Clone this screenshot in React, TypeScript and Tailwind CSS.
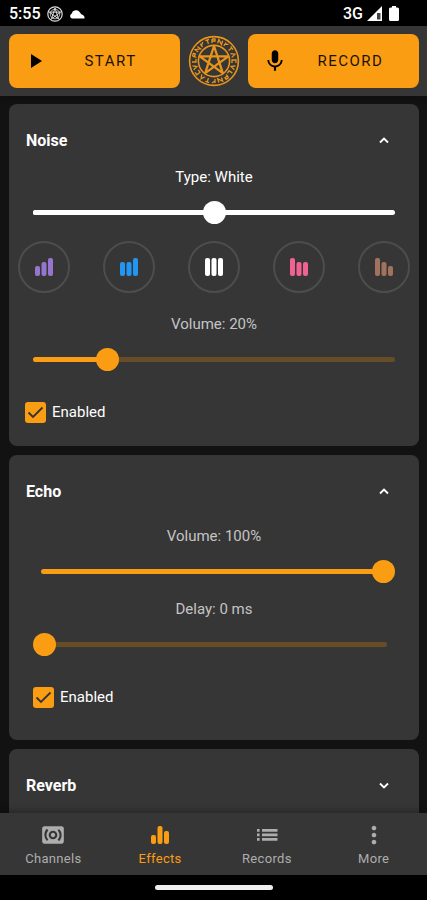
import { useState } from "react";
import type { ReactNode } from "react";
import { MdMic, MdMoreVert, MdPlayArrow, MdSurroundSound } from "react-icons/md";

const noiseTypes = [
  { name: "Violet", color: "text-[#9575cd]", bars: [10, 14, 18] },
  { name: "Blue", color: "text-[#2196f3]", bars: [14, 14, 18] },
  { name: "White", color: "text-white", bars: [18, 18, 18] },
  { name: "Pink", color: "text-[#f06292]", bars: [18, 14, 14] },
  { name: "Brown", color: "text-[#a1735f]", bars: [18, 14, 10] },
];

const runes = [
  "M-2 -2V2M-2 -2H1V0H-2", "M-2 2V-2L2 2V-2", "M-1 -2V2M-1 0L2 -2", "M-2 -2H2M0 -2V2",
  "M-2 2L0 -2L2 2", "M2 -2H-1V2H2", "M-2 -2L0 2L2 -2", "M-1 -2V2H2",
];

function Bars({ heights }: { heights: number[] }) {
  return (
    <svg width="20" height="20" viewBox="0 0 20 20" fill="currentColor" aria-hidden="true">
      {heights.map((h, i) => (
        <rect key={i} x={1 + i * 6.5} y={19 - h} width="5" height={h} rx="2" />
      ))}
    </svg>
  );
}

function ListIcon() {
  return (
    <svg width="22" height="14" viewBox="0 0 22 14" fill="currentColor" aria-hidden="true">
      {[1, 5.5, 10].map((y) => (
        <path key={y} d={`M1 ${y}h2.600v2.700h-2.600zM6 ${y}h15.500v2.700h-15.500z`} />
      ))}
    </svg>
  );
}

function Pentacle() {
  return (
    <svg width="52" height="52" viewBox="-26 -26 52 52" fill="none" stroke="#e8941a" className="shrink-0" aria-hidden="true">
      <circle r="24.4" strokeWidth="1.6" />
      <circle r="15.6" strokeWidth="1.6" />
      <path d="M0 -15L8.8 12.1L-14.3 -4.6H14.3L-8.8 12.1Z" strokeWidth="2.3" strokeLinejoin="round" />
      {Array.from({ length: 20 }, (_, i) => (
        <path key={i} d={runes[i % runes.length]} transform={`rotate(${i * 18}) translate(0 -20)`} strokeWidth="1.3" />
      ))}
    </svg>
  );
}

type SliderProps = { label: string; value: number; onChange: (v: number) => void; max?: number; white?: boolean };

function Slider({ label, value, onChange, max = 100, white }: SliderProps) {
  return (
    <div className={`mt-[13px] grid items-center ${white ? "text-white" : "text-[#fb9d13]"}`}>
      <div className={`col-start-1 row-start-1 mx-2 h-[5px] overflow-hidden rounded-full ${white ? "bg-white" : "bg-[#674d27]"}`}>
        <div className="h-full bg-current" style={{ width: `${(value / max) * 100}%` }} />
      </div>
      <input
        type="range"
        aria-label={label}
        min={0}
        max={max}
        value={value}
        onChange={(e) => onChange(Number(e.target.value))}
        className="col-start-1 row-start-1 h-6 w-full cursor-pointer appearance-none bg-transparent [&::-webkit-slider-thumb]:size-[23px] [&::-webkit-slider-thumb]:appearance-none [&::-webkit-slider-thumb]:rounded-full [&::-webkit-slider-thumb]:bg-current"
      />
    </div>
  );
}

function Enabled() {
  const [on, setOn] = useState(true);
  return (
    <label className="mt-[30px] flex h-[22px] items-center gap-[6px] text-[15px] text-white">
      <span className="grid size-[21px]">
        <input
          type="checkbox"
          checked={on}
          onChange={() => setOn(!on)}
          className="col-start-1 row-start-1 size-[21px] appearance-none rounded-[3px] border-2 border-[#fb9d13] checked:bg-[#fb9d13]"
        />
        {on && (
          <svg viewBox="0 0 21 21" className="pointer-events-none col-start-1 row-start-1" fill="none" stroke="#333" strokeWidth="1.8" aria-hidden="true">
            <path d="M3.5 10.5L8 15L17.5 5.5" />
          </svg>
        )}
      </span>
      Enabled
    </label>
  );
}

function Card({ title, initial = true, children }: { title: string; initial?: boolean; children?: ReactNode }) {
  const [open, setOpen] = useState(initial);
  return (
    <section className="rounded-lg bg-[#363636] px-4 pt-[26px] pb-[23px]">
      <h2>
        <button type="button" aria-expanded={open} onClick={() => setOpen(!open)} className="flex h-[22px] w-full items-center justify-between pr-3 pl-px text-base font-bold text-white">
          {title}
          <svg width="14" height="14" viewBox="0 0 14 14" fill="none" stroke="currentColor" strokeWidth="1.8" aria-hidden="true">
            <path d={open ? "M3 8.500L7 4.500L11 8.500" : "M3 4.500L7 8.500L11 4.500"} />
          </svg>
        </button>
      </h2>
      {open && children}
    </section>
  );
}

const tabs = [
  { label: "Channels", icon: <MdSurroundSound className="size-[26px]" /> },
  { label: "Effects", icon: <Bars heights={[9, 18, 13]} /> },
  { label: "Records", icon: <ListIcon /> },
  { label: "More", icon: <MdMoreVert className="size-7" /> },
];

export default function App() {
  const [type, setType] = useState(2);
  const [noiseVolume, setNoiseVolume] = useState(20);
  const [echoVolume, setEchoVolume] = useState(100);
  const [delay, setDelay] = useState(0);
  const [tab, setTab] = useState("Effects");

  return (
    <div className="flex h-screen flex-col bg-[#121212] font-[Roboto,sans-serif]">
      <div className="flex h-[26px] shrink-0 items-center justify-between bg-black pt-px pr-7 pl-[9px] text-base font-medium text-white">
        <div className="flex items-center gap-[6px]">
          <span>5:55</span>
          <svg width="16" height="16" viewBox="-8 -8 16 16" fill="none" stroke="#ddd" aria-hidden="true">
            <circle r="7.2" strokeWidth="1.2" />
            <circle r="4.8" strokeWidth="0.8" />
            <path d="M0 -6L3.5 4.9L-5.7 -1.9H5.7L-3.5 4.9Z" strokeWidth="1" />
          </svg>
          <svg width="16" height="10" viewBox="0 0 16 10" fill="white" aria-hidden="true">
            <path d="M3 9.500A2.500 2.500 0 0 1 2.600 4.800A4.600 4.600 0 0 1 11 3.500Q12 5.500 14 6Q15.800 7 15.600 9.500Z" />
          </svg>
        </div>
        <div className="flex items-center gap-1">
          <span>3G</span>
          <svg width="15" height="15" viewBox="0 0 15 15" aria-hidden="true">
            <path d="M0 15L15 0V15Z" fill="white" />
            <path d="M10 7H13.500V13.500H10Z" fill="#444" />
          </svg>
          <svg width="10" height="15" viewBox="0 0 10 15" className="ml-[3px]" fill="white" aria-hidden="true">
            <path d="M3 0H7V1.500H8.500Q10 1.500 10 3V13.500Q10 15 8.500 15H1.500Q0 15 0 13.500V3Q0 1.500 1.500 1.500H3Z" />
          </svg>
        </div>
      </div>

      <header className="z-10 flex h-[70px] shrink-0 items-center gap-2 bg-[#363636] pr-2 pl-[9px] shadow-md">
        <button type="button" className="flex h-[54px] flex-1 items-center rounded-lg bg-[#fb9d13] px-[14px] text-[15px] tracking-widest text-[#1c1203]">
          <MdPlayArrow className="size-6 text-black" />
          <span className="flex-1 pl-2 text-center">START</span>
        </button>
        <Pentacle />
        <button type="button" className="flex h-[54px] flex-1 items-center rounded-lg bg-[#fb9d13] px-[14px] text-[15px] tracking-widest text-[#1c1203]">
          <MdMic className="size-[26px] text-black" />
          <span className="flex-1 pl-2 text-center">RECORD</span>
        </button>
      </header>

      <main className="flex flex-1 flex-col gap-[9px] overflow-y-auto py-2 pr-2 pl-[9px] [scrollbar-width:none] *:shrink-0">
        <Card title="Noise">
          <p className="mt-[15px] text-center text-[15px] leading-5 text-white">Type: {noiseTypes[type].name}</p>
          <Slider label="Type" value={type} max={4} onChange={setType} white />
          <div className="-mx-[7px] mt-[17px] flex justify-between">
            {noiseTypes.map((n, i) => (
              <button key={n.name} type="button" aria-label={n.name} onClick={() => setType(i)} className={`flex size-[52px] items-center justify-center rounded-full border-2 border-[#4d4d4d] ${n.color}`}>
                <Bars heights={n.bars} />
              </button>
            ))}
          </div>
          <p className="mt-[21px] text-center text-[15px] leading-5 text-[#c4c4c4]">Volume: {noiseVolume}%</p>
          <Slider label="Volume" value={noiseVolume} onChange={setNoiseVolume} />
          <Enabled />
        </Card>

        <Card title="Echo">
          <div className="px-2 pt-2 pb-[9px]">
            <p className="mt-[15px] text-center text-[15px] leading-5 text-[#c4c4c4]">Volume: {echoVolume}%</p>
            <Slider label="Volume" value={echoVolume} onChange={setEchoVolume} />
            <p className="mt-4 text-center text-[15px] leading-5 text-[#c4c4c4]">Delay: {delay} ms</p>
            <Slider label="Delay" value={delay} max={1000} onChange={setDelay} />
            <Enabled />
          </div>
        </Card>

        <Card title="Reverb" initial={false} />
      </main>

      <nav className="z-10 flex h-[62px] shrink-0 bg-[#363636] shadow-[0_-3px_6px_rgba(0,0,0,0.25)]">
        {tabs.map((t) => (
          <button
            key={t.label}
            type="button"
            onClick={() => setTab(t.label)}
            className={`flex flex-1 flex-col items-center pt-2 text-[13px] leading-5 tracking-wide ${tab === t.label ? "text-[#fb9d13]" : "text-[#adadad]"}`}
          >
            <span className="flex h-7 items-center">{t.icon}</span>
            {t.label}
          </button>
        ))}
      </nav>
      <div className="flex h-[25px] shrink-0 items-center justify-center bg-black">
        <div className="h-[5px] w-[118px] rounded-full bg-[#eee]" />
      </div>
    </div>
  );
}
